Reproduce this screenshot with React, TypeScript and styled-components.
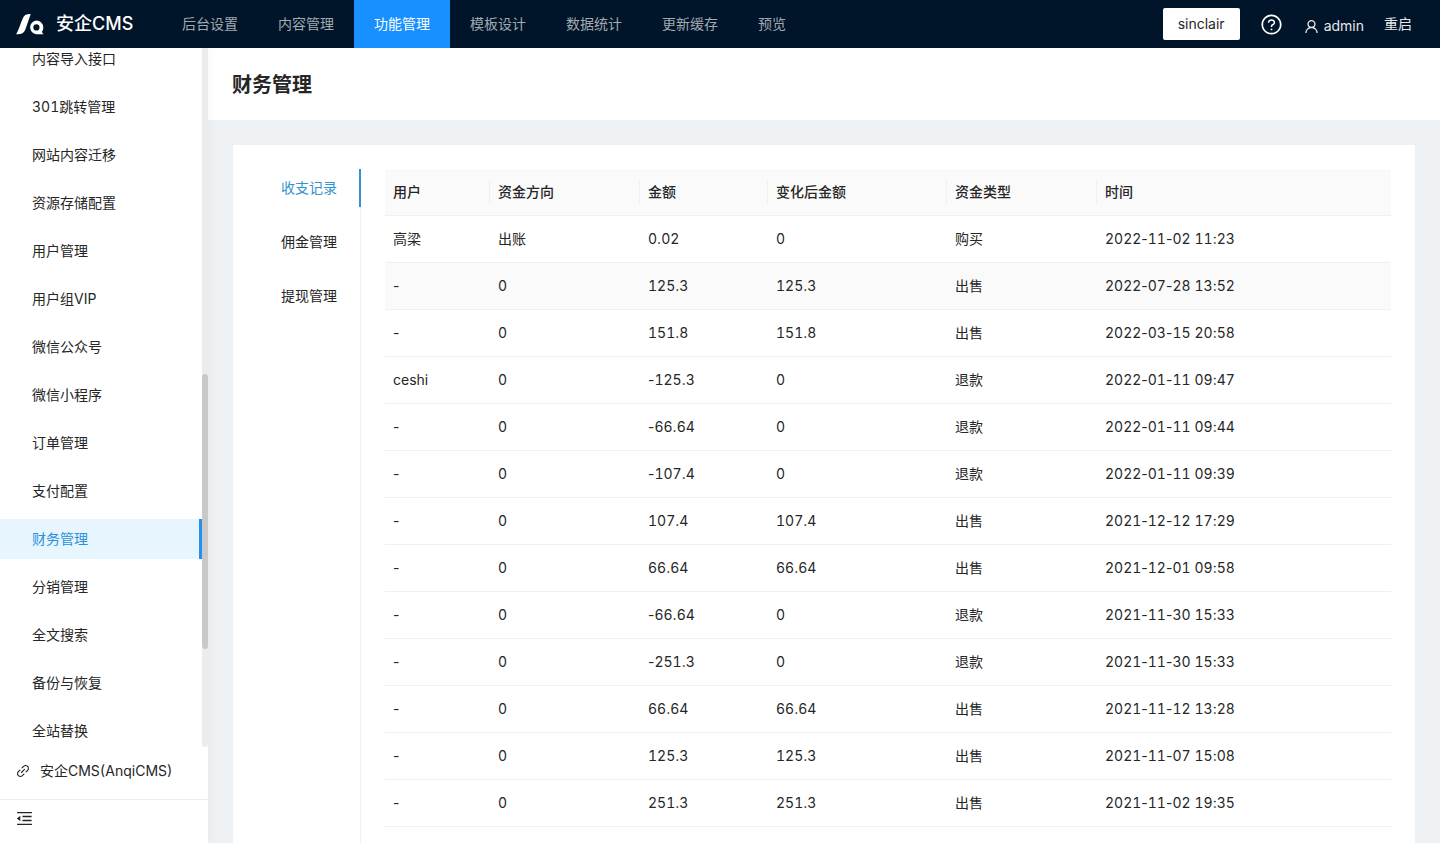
import React, { useLayoutEffect, useRef } from "react";
import styled, { createGlobalStyle } from "styled-components";
import {
  AiOutlineLink,
  AiOutlineMenuFold,
  AiOutlineQuestionCircle,
  AiOutlineUser,
} from "react-icons/ai";

const GlobalStyle = createGlobalStyle`
  *, *::before, *::after { box-sizing: border-box; }
  body {
    margin: 0;
    color: #262626;
    background: #edf1f4;
    font-family: Inter, "Noto Sans CJK SC", sans-serif;
    font-size: 14px;
    line-height: 22px;
    font-variant-numeric: tabular-nums;
  }
  button { font: inherit; color: inherit; border: 0; padding: 0; background: none; cursor: pointer; }
  a { color: inherit; text-decoration: none; }
  ul { list-style: none; margin: 0; padding: 0; }
`;

const Shell = styled.div`
  display: flex;
  flex-direction: column;
  height: 100vh;
`;

const TopBar = styled.header`
  display: flex;
  align-items: center;
  flex: none;
  height: 48px;
  padding: 0 28px 0 16px;
  color: #e6e8ea;
  background: #001529;
`;

const Brand = styled.a`
  display: flex;
  align-items: center;
  gap: 12px;
  width: 146px;
  color: #fff;
  font-size: 18px;
  font-weight: 500;
  white-space: nowrap;
`;

const TopNav = styled.nav`
  display: flex;
  flex: 1;
`;

const TopLink = styled.a<{ $active?: boolean }>`
  padding: 0 20px;
  line-height: 48px;
  color: ${(p) => (p.$active ? "#fff" : "#a1a9b1")};
  background: ${(p) => (p.$active ? "#1890ff" : "transparent")};
`;

const Tools = styled.div`
  display: flex;
  align-items: center;
  gap: 20px;
`;

const SiteButton = styled.button`
  height: 32px;
  padding: 0 15px;
  color: #262626;
  background: #fff;
  border-radius: 2px;
`;

const IconButton = styled.button`
  display: flex;
  color: #fff;
`;

const Account = styled.button`
  display: flex;
  align-items: center;
  gap: 4px;
  padding-top: 4px;
`;

const Body = styled.div`
  display: flex;
  flex: 1;
  min-height: 0;
`;

const Sider = styled.aside`
  display: flex;
  flex-direction: column;
  flex: none;
  width: 208px;
  background: #fff;
  box-shadow: 2px 0 8px rgba(29, 35, 41, 0.03);
  z-index: 1;
`;

const MenuArea = styled.div`
  display: flex;
  flex: 1;
  min-height: 0;
`;

const Menu = styled.ul`
  display: flex;
  flex-direction: column;
  flex: 1;
  gap: 8px;
  overflow-y: auto;
  scrollbar-width: none;
`;

const MenuLink = styled.a<{ $active?: boolean }>`
  display: block;
  padding-left: 32px;
  line-height: 40px;
  color: ${(p) => (p.$active ? "#2b91dc" : "inherit")};
  background: ${(p) => (p.$active ? "#e6f5fe" : "transparent")};
  border-right: 3px solid ${(p) => (p.$active ? "#2490ec" : "transparent")};
`;

const Track = styled.div`
  display: grid;
  grid-template-rows: 326fr 275fr 98fr;
  width: 6px;
  background: #ececec;
  border-radius: 0 0 3px 3px;
`;

const Thumb = styled.div`
  grid-row: 2;
  background: #c9c9c9;
  border-radius: 3px;
`;

const SiteLink = styled.a`
  display: flex;
  align-items: center;
  gap: 9px;
  height: 40px;
  margin: 4px 0 8px;
  padding: 0 15px;
`;

const CollapseButton = styled.button`
  display: flex;
  align-items: center;
  height: 44px;
  padding: 0 15px 6px;
  border-top: 1px solid #ebedef;
`;

const Main = styled.main`
  flex: 1;
  min-width: 0;
  overflow-y: auto;
  scrollbar-width: none;
`;

const PageHeader = styled.div`
  padding: 21px 24px 19px;
  background: #fff;
`;

const PageTitle = styled.h1`
  margin: 0;
  font-size: 20px;
  font-weight: 600;
  line-height: 32px;
`;

const Card = styled.section`
  display: flex;
  margin: 25px;
  padding: 24px;
  background: #fff;
`;

const TabList = styled.div`
  display: flex;
  flex-direction: column;
  flex: none;
  gap: 16px;
  border-right: 1px solid #f0f0f0;
`;

const Tab = styled.button<{ $active?: boolean }>`
  margin-right: -1px;
  padding: 8px 22px 8px 24px;
  color: ${(p) => (p.$active ? "#3592d0" : "inherit")};
  border-right: 2px solid ${(p) => (p.$active ? "#3592c8" : "transparent")};
`;

const TabPanel = styled.div`
  flex: 1;
  min-width: 0;
  padding: 0 0 56px 24px;
`;

const Table = styled.table`
  width: 100%;
  table-layout: fixed;
  border-collapse: separate;
  border-spacing: 0;
`;

const Col = styled.col<{ $width?: number }>`
  width: ${(p) => (p.$width ? `${p.$width}px` : "auto")};
`;

const HeadCell = styled.th`
  position: relative;
  padding: 12px 8px;
  font-weight: 500;
  text-align: left;
  background: #fafafa;
  border-bottom: 1px solid #f0f0f0;

  &:not(:last-child)::after {
    content: "";
    position: absolute;
    top: 11px;
    right: 0;
    width: 1px;
    height: 24px;
    background: #f0f0f0;
  }
`;

const Row = styled.tr<{ $hover?: boolean }>`
  background: ${(p) => (p.$hover ? "#fafafa" : "transparent")};
`;

const Cell = styled.td`
  padding: 12px 8px;
  border-bottom: 1px solid #f0f0f0;
`;

const Mark = styled.span`
  font-variant-numeric: normal;
`;

// Digits line up in columns; hyphens and colons keep their own narrower width.
function Figures({ value }: { value: string }) {
  return (
    <>
      {value.split(/([-:. ]+)/).map((part, i) => (i % 2 ? <Mark key={i}>{part}</Mark> : part))}
    </>
  );
}

const topItems = ["后台设置", "内容管理", "功能管理", "模板设计", "数据统计", "更新缓存", "预览"];

const menuItems = [
  "内容导入接口", "301跳转管理", "网站内容迁移", "资源存储配置", "用户管理",
  "用户组VIP", "微信公众号", "微信小程序", "订单管理", "支付配置",
  "财务管理", "分销管理", "全文搜索", "备份与恢复", "全站替换",
];

const tabs = ["收支记录", "佣金管理", "提现管理"];

const columns: { title: string; width?: number }[] = [
  { title: "用户", width: 105 },
  { title: "资金方向", width: 150 },
  { title: "金额", width: 128 },
  { title: "变化后金额", width: 179 },
  { title: "资金类型", width: 150 },
  { title: "时间" },
];

const records = [
  ["高梁", "出账", "0.02", "0", "购买", "2022-11-02 11:23"],
  ["-", "0", "125.3", "125.3", "出售", "2022-07-28 13:52"],
  ["-", "0", "151.8", "151.8", "出售", "2022-03-15 20:58"],
  ["ceshi", "0", "-125.3", "0", "退款", "2022-01-11 09:47"],
  ["-", "0", "-66.64", "0", "退款", "2022-01-11 09:44"],
  ["-", "0", "-107.4", "0", "退款", "2022-01-11 09:39"],
  ["-", "0", "107.4", "107.4", "出售", "2021-12-12 17:29"],
  ["-", "0", "66.64", "66.64", "出售", "2021-12-01 09:58"],
  ["-", "0", "-66.64", "0", "退款", "2021-11-30 15:33"],
  ["-", "0", "-251.3", "0", "退款", "2021-11-30 15:33"],
  ["-", "0", "66.64", "66.64", "出售", "2021-11-12 13:28"],
  ["-", "0", "125.3", "125.3", "出售", "2021-11-07 15:08"],
  ["-", "0", "251.3", "251.3", "出售", "2021-11-02 19:35"],
];

function Logo() {
  return (
    <svg width="28" height="22" viewBox="0 0 28 22" fill="#fff" aria-hidden="true">
      <path d="M.2 21.3C2.8 16.500 4.700 9.800 7.100 4.700C8.600 1.600 10.500.900 14.700.900C13 5.500 11.300 11.500 9.400 16.200C7.900 20 5.800 21.300.2 21.300Z" />
      <path
        fillRule="evenodd"
        d="M20.300 7.400A7 7 0 0 1 27.300 14.400C27.300 16.300 26.700 17.500 25.900 18.700C26.200 19.900 26.800 20.600 27.800 21.300H20.300A7 7 0 0 1 20.300 7.400ZM20.400 11.300A3.100 3.100 0 1 0 20.400 17.500A3.100 3.100 0 0 0 20.400 11.300Z"
      />
    </svg>
  );
}

export default function App() {
  const menuRef = useRef<HTMLUListElement>(null);

  useLayoutEffect(() => {
    if (menuRef.current) menuRef.current.scrollTop = 9;
  }, []);

  return (
    <Shell>
      <GlobalStyle />
      <TopBar>
        <Brand href="#">
          <Logo />
          安企CMS
        </Brand>
        <TopNav>
          {topItems.map((item) => (
            <TopLink key={item} href="#" $active={item === "功能管理"}>
              {item}
            </TopLink>
          ))}
        </TopNav>
        <Tools>
          <SiteButton>sinclair</SiteButton>
          <IconButton aria-label="帮助">
            <AiOutlineQuestionCircle size={23} />
          </IconButton>
          <Account>
            <AiOutlineUser size={17} />
            admin
          </Account>
          <button>重启</button>
        </Tools>
      </TopBar>
      <Body>
        <Sider>
          <MenuArea>
            <Menu ref={menuRef}>
              {menuItems.map((item) => (
                <li key={item}>
                  <MenuLink href="#" $active={item === "财务管理"}>
                    {item}
                  </MenuLink>
                </li>
              ))}
            </Menu>
            <Track>
              <Thumb />
            </Track>
          </MenuArea>
          <SiteLink href="#">
            <AiOutlineLink size={16} />
            安企CMS(AnqiCMS)
          </SiteLink>
          <CollapseButton aria-label="收起菜单">
            <AiOutlineMenuFold size={19} />
          </CollapseButton>
        </Sider>
        <Main>
          <PageHeader>
            <PageTitle>财务管理</PageTitle>
          </PageHeader>
          <Card>
            <TabList role="tablist" aria-orientation="vertical">
              {tabs.map((tab, i) => (
                <Tab key={tab} role="tab" aria-selected={i === 0} $active={i === 0}>
                  {tab}
                </Tab>
              ))}
            </TabList>
            <TabPanel role="tabpanel">
              <Table>
                <colgroup>
                  {columns.map((c) => (
                    <Col key={c.title} $width={c.width} />
                  ))}
                </colgroup>
                <thead>
                  <tr>
                    {columns.map((c) => (
                      <HeadCell key={c.title} scope="col">
                        {c.title}
                      </HeadCell>
                    ))}
                  </tr>
                </thead>
                <tbody>
                  {records.map((record, i) => (
                    <Row key={i} $hover={i === 1}>
                      {record.map((value, j) => (
                        <Cell key={j}>
                          <Figures value={value} />
                        </Cell>
                      ))}
                    </Row>
                  ))}
                </tbody>
              </Table>
            </TabPanel>
          </Card>
        </Main>
      </Body>
    </Shell>
  );
}
